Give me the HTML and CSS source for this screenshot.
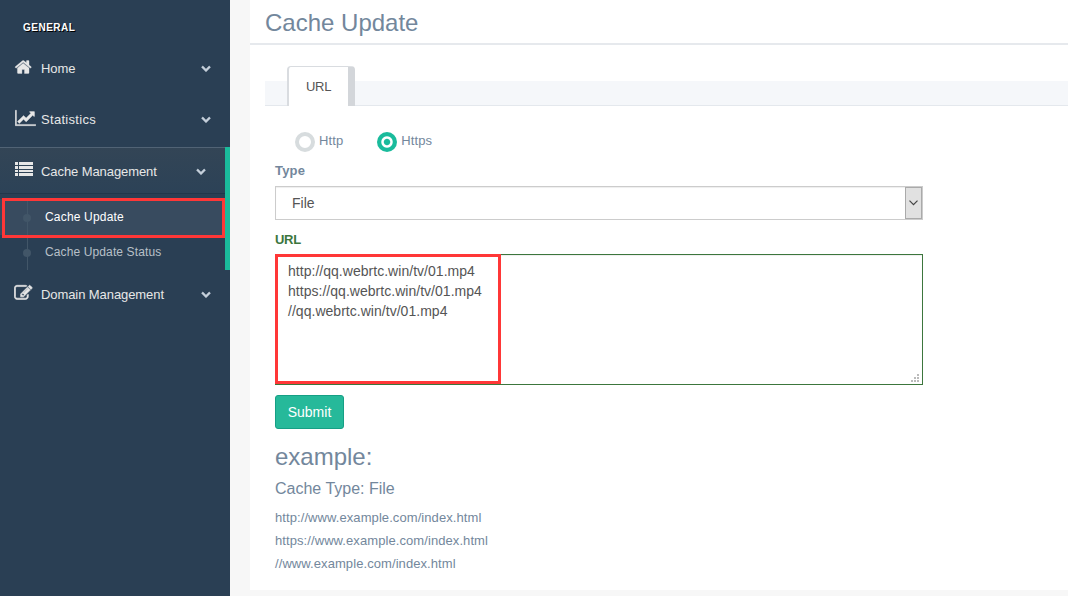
FILE: index.html
```html
<!DOCTYPE html>
<html lang="en">
<head>
<meta charset="utf-8">
<title>Cache Update</title>
<link rel="stylesheet" href="styles.css">
</head>
<body>
<svg width="0" height="0" class="defs"><defs>
<path id="chev" d="M1683 808l-742 741q-19 19-45 19t-45-19l-742-741q-19-19-19-45.500t19-45.500l166-165q19-19 45-19t45 19l531 531 531-531q19-19 45-19t45 19l166 165q19 19 19 45.500t-19 45.500z"/>
</defs></svg>
<div class="app">
  <aside class="sidebar">
    <h3 class="section">GENERAL</h3>
    <nav class="menu">
      <a class="item home"><svg class="icon" viewBox="0 0 2048 1792"><path d="M1472 992v480q0 26-19 45t-45 19h-384v-384h-256v384h-384q-26 0-45-19t-19-45v-480q0-1 .5-3t.5-3l575-474 575 474q1 2 1 6zm223-69l-62 74q-8 9-21 11h-3q-13 0-21-7l-692-577-692 577q-12 8-24 7-13-2-21-11l-62-74q-8-10-7-23.500t11-21.500l719-599q32-26 76-26t76 26l244 204v-195q0-14 9-23t23-9h192q14 0 23 9t9 23v408l219 182q10 8 11 21.500t-7 23.500z"/></svg><span class="label">Home</span><svg class="chevron" viewBox="0 0 1792 1792"><use href="#chev"/></svg></a>
      <a class="item stats"><svg class="icon" viewBox="0 0 2048 1792"><path d="M2048 1536v128h-2048v-1536h128v1408h1920zm-128-1248v435q0 21-19.500 29.500t-35.500-7.500l-121-121-633 633q-10 10-23 10t-23-10l-233-233-416 416-192-192 585-585q10-10 23-10t23 10l233 233 464-464-121-121q-16-16-7.500-35.500t29.500-19.500h435q14 0 23 9t9 23z"/></svg><span class="label">Statistics</span><svg class="chevron" viewBox="0 0 1792 1792"><use href="#chev"/></svg></a>
      <div class="group">
        <a class="item open"><svg class="icon" viewBox="0 0 21 18"><path d="M0 2h3v3H0zM4 2h14v3H4zM0 6h3v3H0zM4 6h14v3H4zM0 10h3v2H0zM4 10h14v2H4zM0 13h3v3H0zM4 13h14v3H4z"/></svg><span class="label">Cache Management</span><svg class="chevron" viewBox="0 0 1792 1792"><use href="#chev"/></svg></a>
        <div class="children">
          <a class="child current">Cache Update</a>
          <a class="child">Cache Update Status</a>
        </div>
      </div>
      <a class="item domain"><svg class="icon" viewBox="0 0 2048 1792"><path d="M888 1184l116-116-152-152-116 116v56h96v96h56zm440-720q-16-16-33 1l-350 350q-17 17-1 33t33-1l350-350q17-17 1-33zm80 594v190q0 119-84.500 203.500t-203.500 84.500h-832q-119 0-203.500-84.500t-84.500-203.500v-832q0-119 84.500-203.500t203.500-84.500h832q63 0 117 25 15 7 18 23 3 17-9 29l-49 49q-14 14-32 8-23-6-45-6h-832q-66 0-113 47t-47 113v832q0 66 47 113t113 47h832q66 0 113-47t47-113v-126q0-13 9-22l64-64q15-15 35-7t20 29zm-96-738l288 288-672 672h-288v-288zm444 132l-92 92-288-288 92-92q28-28 68-28t68 28l152 152q28 28 28 68t-28 68z"/></svg><span class="label">Domain Management</span><svg class="chevron" viewBox="0 0 1792 1792"><use href="#chev"/></svg></a>
    </nav>
  </aside>
  <main class="main">
    <section class="panel">
      <h2 class="title">Cache Update</h2>
      <div class="tabs"><a class="tab">URL</a></div>
      <form class="form">
        <div class="radios">
          <span class="radio"><i class="dot"></i>Http</span>
          <span class="radio"><i class="dot on"></i>Https</span>
        </div>
        <div class="field-label">Type</div>
        <div class="select"><span>File</span><span class="drop"><svg width="9" height="6" viewBox="0 0 9 6"><path d="M.5 .7L4.500 4.700L8.500 .7"/></svg></span></div>
        <div class="field-label ok">URL</div>
        <div class="area">
          <div class="lines">http://qq.webrtc.win/tv/01.mp4<br>https://qq.webrtc.win/tv/01.mp4<br>//qq.webrtc.win/tv/01.mp4</div>
          <svg class="grip" width="8" height="8" viewBox="0 0 8 8"><path d="M6 0h2v2H6zM3 3h2v2H3zM6 3h2v2H6zM0 6h2v2H0zM3 6h2v2H3zM6 6h2v2H6z"/></svg>
        </div>
        <button class="submit" type="button">Submit</button>
      </form>
      <div class="example">
        <h3>example:</h3>
        <h4>Cache Type: File</h4>
        <p>http://www.example.com/index.html</p>
        <p>https://www.example.com/index.html</p>
        <p>//www.example.com/index.html</p>
      </div>
    </section>
  </main>
</div>
</body>
</html>
```
FILE: styles.css
```css
*, *::before, *::after { box-sizing: border-box; }
body { margin: 0; font: 13px/18px "Liberation Sans", Arial, sans-serif; color: #73879c; background: #f7f7f7; overflow: hidden; }
h2, h3, h4, p { margin: 0; font-weight: 400; }
.defs { position: absolute; }
.app { display: flex; height: 596px; }

.sidebar { width: 230px; background: #2a3f54; color: #e7e7e7; }
.section { height: 43px; padding: 19px 0 0 23px; font-size: 10px; font-weight: 700; letter-spacing: .5px; color: #fff; text-shadow: 1px 1px #000; }
.item { display: flex; height: 51px; padding: 0 19px 0 15px; align-items: center; }
.icon { width: 21px; height: 18px; margin-right: 5px; margin-top: -4px; fill: #e7e7e7; stroke: #e7e7e7; stroke-width: 35; }
.open .icon { stroke: none; margin-top: -6px; }
.home .icon, .domain .icon { margin-left: -1px; margin-right: 6px; }
.domain .icon { stroke-width: 60; }
.label { flex: 1; white-space: nowrap; letter-spacing: -.08px; }
.stats .label { letter-spacing: .3px; }
.chevron { width: 10px; height: 10px; margin-top: -2px; fill: #c4cfda; stroke: #c4cfda; stroke-width: 60; }
.group { margin-top: 2px; height: 123px; border-right: 5px solid #1abb9c; }
.open { height: 47px; padding-top: 2px; border-top: 1px solid #516375; border-bottom: 1px solid #22374a; background: linear-gradient(#334556, #2c4257); }
.children { padding-top: 5px; position: relative; }
.children::before { content: ""; position: absolute; left: 27px; top: 5px; height: 71px; width: 1px; background: #425668; z-index: 1; }
.child { position: relative; display: block; height: 35px; padding: 9px 0 0 45px; line-height: 17px; color: #b8c0c8; font-size: 12px; letter-spacing: .12px; }
.current { height: 36px; padding-top: 10px; background: #384b5f; color: #fff; letter-spacing: .18px; }
.child::before { content: ""; position: absolute; z-index: 2; left: 23px; top: 14px; width: 8px; height: 8px; border-radius: 50%; background: #425668; }
.current::before { top: 15px; }
.current::after { content: ""; position: absolute; z-index: 3; left: 2px; top: -1px; width: 223px; height: 40px; border: 3px solid #ff3737; }
.domain { height: 49px; }

.main { flex: 1; padding-left: 20px; }
.panel { height: 590px; background: #fff; }
.title { height: 45px; padding: 8px 0 0 15px; border-bottom: 2px solid #e6e9ed; font-size: 24px; line-height: 30px; }
.tabs { height: 25px; margin: 36px 0 0 15px; padding-left: 22px; display: flex; align-items: flex-end; background: #f5f7fa; border-bottom: 1px solid #e4e8ed; }
.tab { width: 68px; height: 40px; margin-bottom: -1px; border: 1px solid #d9dce0; border-left-width: 2px; border-right: 7px solid #d3d6da; border-bottom: 0; border-radius: 4px 4px 0 0; background: #fff; padding: 11px 0 0 17px; color: #555; letter-spacing: -.3px; }
.form { margin-left: 25px; width: 648px; }
.radios { display: flex; height: 55px; padding: 25px 0 0 20px; gap: 34px; line-height: 20px; letter-spacing: .1px; }
.radio { display: flex; height: 21px; gap: 4px; }
.dot { width: 20px; height: 20px; margin-top: 1px; border: 4.500px solid #d7dcde; border-radius: 50%; }
.dot.on { border: 0; background: radial-gradient(circle, #1abb9c 2.700px, #fff 3.700px, #fff 5.200px, #1abb9c 6.200px); }
.field-label { height: 25px; padding-top: 1px; font-weight: 700; letter-spacing: .2px; }
.select { display: flex; justify-content: space-between; height: 34px; border: 1px solid #ccc; padding-left: 16px; color: #555; font-size: 14px; line-height: 32px; box-shadow: inset 0 1px 1px #eee; }
.drop { width: 17px; border: 1px solid #aaa; background: #e1e1e1; display: grid; place-items: center; }
.drop path { fill: none; stroke: #444; stroke-width: 1.2; }
.ok { height: 34px; padding-top: 11px; color: #3c763d; letter-spacing: -.3px; }
.area { position: relative; height: 131px; border: 1px solid #3c763d; box-shadow: inset 0 1px 1px #eee; padding: 6px 12px; color: #555; font-size: 14px; line-height: 20px; letter-spacing: .03px; }
.area::after { content: ""; position: absolute; left: -1px; top: -1px; width: 226px; height: 130px; border: 3px solid #ff3737; }
.grip { position: absolute; right: 3px; bottom: 2px; fill: #bbb; }
.submit { display: block; margin-top: 10px; width: 69px; height: 34px; padding: 0; border: 1px solid #169f85; border-radius: 3px; background: #26b99a; color: #fff; font: 14px "Liberation Sans", Arial, sans-serif; }
.example { margin: 13px 0 0 25px; }
.example h3 { font-size: 24px; line-height: 30px; }
.example h4 { margin: 7px 0; font-size: 16px; line-height: 20px; }
.example p { height: 23px; line-height: 23px; letter-spacing: .08px; }
```
